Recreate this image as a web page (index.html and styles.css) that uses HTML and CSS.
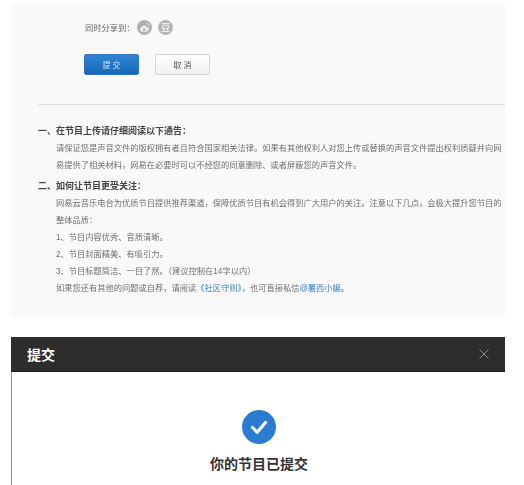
FILE: index.html
```html
<!DOCTYPE html>
<html lang="zh-CN">
<head>
<meta charset="utf-8">
<title>提交</title>
<link rel="stylesheet" href="styles.css">
</head>
<body>
<section class="form-panel">
  <div class="share">
    <span class="share-label">同时分享到：</span>
    <svg class="share-icon" viewBox="0 0 16 16"><circle cx="8" cy="8" r="8" fill="#b0b0b0"/><path d="M3.2 10.600c0-2.200 2.600-4.400 4.600-4.700.9-.1 1.200.5 1 1.300 1.400-.5 2.500-.2 2.400.9 1 .3 1.600.9 1.600 1.800 0 1.500-2 2.800-4.600 2.800-2.700 0-5-.9-5-2.100z" fill="#eee"/><circle cx="7.600" cy="10.500" r="1.500" fill="#b0b0b0"/><path d="M10.400 3.600c1.500 0 2.700 1.100 2.700 2.600" fill="none" stroke="#eee" stroke-width="1"/></svg>
    <svg class="share-icon" viewBox="0 0 16 16"><circle cx="8" cy="8" r="8" fill="#b6b6b6"/><path d="M4 3.800h8M5 5.600h6v3.200H5zM5.600 9.400l1 2.200M10.400 9.400l-1 2.200M3.800 12.200h8.400" fill="none" stroke="#eee" stroke-width="1.100"/></svg>
  </div>
  <div class="actions">
    <button class="btn btn-primary">提 交</button>
    <button class="btn btn-default">取 消</button>
  </div>
  <hr class="divider">
  <div class="notes">
    <h3 class="note-title">一、在节目上传请仔细阅读以下通告：</h3>
    <p class="note-line">请保证您是声音文件的版权拥有者且符合国家相关法律。如果有其他权利人对您上传或替换的声音文件提出权利质疑并向网</p>
    <p class="note-line">易提供了相关材料，网易在必要时可以不经您的同意删除、或者屏蔽您的声音文件。</p>
    <h3 class="note-title second">二、如何让节目更受关注：</h3>
    <p class="note-line">网易云音乐电台为优质节目提供推荐渠道，保障优质节目有机会得到广大用户的关注。注意以下几点，会极大提升您节目的</p>
    <p class="note-line">整体品质：</p>
    <p class="note-line">1、节目内容优秀、音质清晰。</p>
    <p class="note-line">2、节目封面精美、有吸引力。</p>
    <p class="note-line">3、节目标题简洁、一目了然。（建议控制在14字以内）</p>
    <p class="note-line">如果您还有其他的问题或自荐，请阅读<a class="link">《社区守则》</a>，也可直接私信<a class="link">@薯西小编</a>。</p>
  </div>
</section>
<section class="dialog">
  <header class="dialog-head">
    <span class="dialog-title">提交</span>
    <svg class="dialog-close" viewBox="0 0 10 10"><path d="M.5.5l9 9M9.500.5l-9 9" fill="none" stroke="#8a8a8a" stroke-width="1"/></svg>
  </header>
  <div class="dialog-body">
    <svg class="check" viewBox="0 0 34 34"><circle cx="17" cy="17" r="17" fill="#2b7bd0"/><path d="M10.500 17.500l4.700 4.800 8.300-9.800" fill="none" stroke="#fff" stroke-width="3.200" stroke-linecap="round" stroke-linejoin="round"/></svg>
    <p class="done">你的节目已提交</p>
  </div>
</section>
</body>
</html>
```
FILE: styles.css
```css
* { box-sizing: border-box; }
html, body { margin: 0; padding: 0; }
body {
  width: 524px;
  height: 485px;
  overflow: hidden;
  background: #fff;
  padding: 4px 19px 0 11px;
  font-family: "Liberation Sans", "Noto Sans CJK SC", sans-serif;
}
.form-panel {
  height: 313px;
  background: #f9f9f9;
  padding: 14px 0 0 27px;
  filter: blur(0.3px);
}
.share {
  display: flex;
  align-items: center;
  height: 18px;
  padding-left: 47px;
}
.share-label {
  font-size: 8.250px;
  color: #666;
  width: 52px;
  white-space: nowrap;
}
.share-icon { width: 15px; height: 15px; margin-right: 6px; }
.actions {
  display: flex;
  gap: 16px;
  margin-top: 18px;
  padding-left: 46px;
}
.btn {
  width: 55px;
  height: 21px;
  border-radius: 2px;
  font: 8px "Liberation Sans", "Noto Sans CJK SC", sans-serif;
  padding: 0;
}
.btn-primary {
  background: linear-gradient(#2f86d6, #1a66b4);
  border: 1px solid #2c78c4;
  color: #d5e6f5;
}
.btn-default {
  background: linear-gradient(#fff, #f1f1f1);
  border: 1px solid #d6d6d6;
  color: #555;
}
.divider {
  margin: 29px 0 0;
  border: 0;
  border-top: 1px solid #dedede;
}
.notes { margin-top: 18px; }
.note-title {
  margin: 0;
  font-size: 9px;
  line-height: 17px;
  font-weight: bold;
  color: #444;
  white-space: nowrap;
}
.note-title.second { margin-top: 4px; }
.note-line {
  margin: 0 0 0 18px;
  font-size: 8.250px;
  line-height: 17px;
  color: #707070;
  white-space: nowrap;
}
.link { color: #3a7fc4; }
.dialog {
  margin-top: 20px;
  height: 148px;
  background: #fff;
  border-left: 1px solid #8f8f8f;
}
.dialog-head {
  height: 35px;
  margin-left: -1px;
  background: #2d2d2d;
  border-bottom: 1px solid #1e1e1e;
  display: flex;
  align-items: center;
  justify-content: space-between;
  padding: 0 16px 0 16px;
}
.dialog-title {
  color: #fff;
  font-size: 14px;
  font-weight: bold;
}
.dialog-close { width: 10px; height: 10px; }
.dialog-body {
  display: flex;
  flex-direction: column;
  align-items: center;
  padding-top: 38px;
}
.check { width: 34px; height: 34px; }
.done {
  margin: 11px 0 0 1px;
  font-size: 14px;
  line-height: 18px;
  font-weight: bold;
  color: #333;
}
```
